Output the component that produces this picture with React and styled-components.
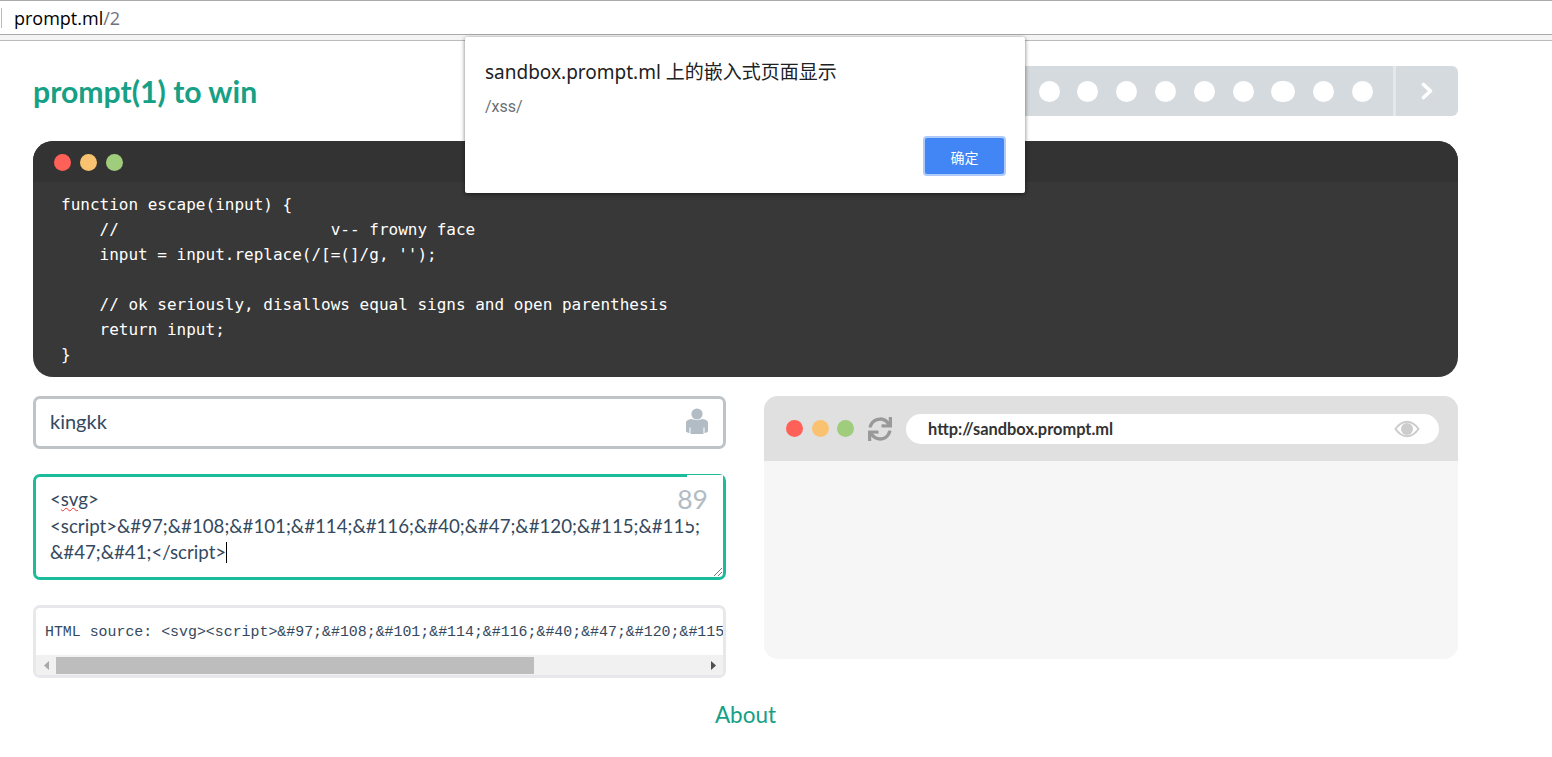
import styled, { createGlobalStyle } from "styled-components";
import { FaSync } from "react-icons/fa";

const GlobalStyle = createGlobalStyle`
  html, body {
    margin: 0;
    padding: 0;
    background: #fff;
    font-family: Lato, "Noto Sans CJK SC", sans-serif;
    color: #34495e;
    overflow: hidden;
  }
`;

const AddressBar = styled.div`
  height: 33px;
  border-top: 1px solid #aaa;
  border-bottom: 1px solid #aaa;
  display: flex;
  align-items: center;
  font-family: "Open Sans", sans-serif;
  font-size: 18px;
  color: #000;
  background: #fff;
  span { color: #6d7480; }
  &::before {
    content: "";
    width: 1px;
    height: 20px;
    background: #bbb;
    margin: 0 12px 0 1px;
  }
`;

const Strip = styled.div`
  height: 5px;
  background: #f4f4f4;
  border-bottom: 1px solid #bbb;
`;

const Page = styled.div`
  width: 1425px;
  margin-left: 33px;
`;

const Header = styled.header`
  margin-top: 25px;
  height: 50px;
  display: flex;
  justify-content: space-between;
  align-items: center;
`;

const Title = styled.h1`
  margin: 0 0 1px;
  font-size: 30.2px;
  font-weight: 700;
  color: #16a085;
`;

const Progress = styled.div`
  width: 500px;
  height: 50px;
  background: #d5dade;
  border-radius: 6px;
  display: flex;
  align-items: center;
  justify-content: flex-end;
`;

const Dots = styled.div`
  display: flex;
  align-items: center;
  gap: 17.8px;
  padding: 1px 20px 0 0;
  border-right: 3px solid #e4e8ea;
  height: 49px;
  margin-right: 1px;
`;

const Dot = styled.i`
  display: block;
  height: 21px;
  width: ${(p) => (p.$wide ? "24px" : "21px")};
  border-radius: 11px;
  background: #fff;
`;

const NextButton = styled.div`
  width: 61px;
  display: flex;
  justify-content: center;
  align-items: center;
`;

const CodePanel = styled.section`
  margin-top: 25px;
  height: 236px;
  background: #383838;
  border-radius: 20px;
  overflow: hidden;
`;

const CodeBar = styled.div`
  height: 41px;
  box-sizing: border-box;
  padding: 2px 0 0 21px;
  background: #333;
  display: flex;
  align-items: center;
  gap: 9px;
`;

const SandboxLights = styled.div`
  display: flex;
  gap: 8.5px;
`;

const Light = styled.i`
  display: block;
  width: 17px;
  height: 17px;
  border-radius: 50%;
  background: ${(p) => p.$color};
`;

const Code = styled.pre`
  margin: 10px 0 0 28px;
  font-family: "DejaVu Sans Mono", monospace;
  font-size: 16px;
  line-height: 25px;
  color: #fff;
`;

const Columns = styled.div`
  margin-top: 19px;
  display: grid;
  grid-template-columns: 693px 694px;
  gap: 38px;
  align-items: start;
`;

const LeftColumn = styled.div`
  display: flex;
  flex-direction: column;
  gap: 25px;
`;

const NameField = styled.div`
  height: 53px;
  box-sizing: border-box;
  border: 3px solid #bdc3c7;
  border-radius: 7px;
  padding: 0 14px 3px;
  display: flex;
  align-items: center;
  justify-content: space-between;
  font-size: 20px;
`;

const EditorField = styled.div`
  position: relative;
  height: 106px;
  box-sizing: border-box;
  border: 3px solid #1abc9c;
  border-radius: 7px;
  padding: 9px 14px;
  font-size: 18.7px;
  line-height: 26.7px;
  white-space: pre;
`;

const Squiggle = styled.span`
  text-decoration: underline wavy #e33;
  text-decoration-thickness: 1px;
`;

const Caret = styled.span`
  display: inline-block;
  width: 1px;
  height: 21px;
  background: #000;
  vertical-align: -4px;
`;

const Counter = styled.div`
  position: absolute;
  top: -2px;
  right: 0;
  width: 36px;
  height: 47px;
  box-sizing: border-box;
  padding: 9px 15px 0 0;
  display: flex;
  justify-content: flex-end;
  background: #fff;
  color: #b2bcc5;
  font-size: 26.5px;
  line-height: 30px;
`;

const Grip = styled.svg`
  position: absolute;
  right: 0;
  bottom: 0;
`;

const SourceBox = styled.div`
  height: 73px;
  box-sizing: border-box;
  border: 3px solid #e8e8ec;
  border-radius: 7px;
  overflow: hidden;
  display: flex;
  flex-direction: column;
`;

const SourceText = styled.div`
  flex: 1;
  padding-left: 9px;
  display: flex;
  align-items: center;
  padding-top: 1px;
  font-family: "Liberation Mono", monospace;
  font-size: 14.9px;
  white-space: nowrap;
  overflow: hidden;
`;

const ScrollTrack = styled.div`
  height: 20px;
  background: #f1f1f1;
  display: flex;
  align-items: center;
`;

const ScrollArrow = styled.div`
  width: 20px;
  display: flex;
  justify-content: center;
  svg { display: block; }
`;

const ScrollThumb = styled.div`
  width: 478px;
  height: 17px;
  background: #bdbdbd;
`;

const ScrollSpace = styled.div`
  flex: 1;
`;

const SandboxPanel = styled.section`
  height: 263px;
  background: #f6f6f6;
  border-radius: 14px;
  overflow: hidden;
`;

const SandboxBar = styled.div`
  height: 65px;
  background: #e0e0e0;
  display: flex;
  align-items: center;
  padding: 0 19px 0 22px;
`;

const UrlPill = styled.div`
  flex: 1;
  height: 30px;
  background: #fff;
  border-radius: 15px;
  display: flex;
  align-items: center;
  justify-content: space-between;
  padding: 0 19px 0 22px;
  font-size: 16.4px;
  font-weight: 700;
  color: #333;
`;

const Refresh = styled(FaSync)`
  width: 24px;
  height: 24px;
  margin: 0 14px 0 14px;
  color: #999;
`;

const About = styled.a`
  display: block;
  margin-top: 22px;
  text-align: center;
  font-size: 22.5px;
  line-height: 30px;
  color: #16a085;
`;

const Alert = styled.div`
  position: absolute;
  left: 465px;
  top: 37px;
  width: 560px;
  height: 156px;
  box-sizing: border-box;
  padding: 23px 20px 0;
  background: #fff;
  border-radius: 2px;
  box-shadow: 0 1px 4px rgba(0, 0, 0, 0.55);
`;

const AlertTitle = styled.div`
  font-family: "Noto Sans", "Noto Sans CJK SC", sans-serif;
  font-size: 19px;
  line-height: 24px;
  color: #202124;
`;

const AlertMessage = styled.div`
  margin-top: 13px;
  font-family: Roboto, sans-serif;
  font-size: 16px;
  line-height: 20px;
  color: #6b6f76;
`;

const AlertButton = styled.button`
  position: absolute;
  right: 19px;
  bottom: 17px;
  width: 83px;
  height: 40px;
  box-sizing: border-box;
  border: 2px solid #aecbfa;
  border-radius: 4px;
  background: #4285f4;
  color: #fff;
  font-family: "Noto Sans CJK SC", sans-serif;
  font-size: 14px;
  padding: 2px 0 0;
`;

const dotWidths = [0, 0, 0, 0, 0, 0, 1, 0, 0];

const UserIcon = () => (
  <svg width="24" height="27" viewBox="0 0 24 27">
    <circle cx="12" cy="6" r="5.6" fill="#b2bcc5" />
    <path d="M1 15c0-2.6 2.5-3.4 5.5-3.9 3.2 1.4 7.8 1.4 11 0 3 .5 5.500 1.300 5.500 3.900v8.500c-1 1-2.500 1.400-3.500 1.600v-5.600h-1v6.500H5.500v-6.500h-1v5.600C3.500 24.900 2 24.500 1 23.500z" fill="#b2bcc5" />
  </svg>
);

const ChevronIcon = () => (
  <svg width="13" height="18" viewBox="0 0 13 18">
    <path d="M2.500 2.500 9.500 9l-7 6.500" fill="none" stroke="#fff" strokeWidth="3.600" strokeLinecap="round" strokeLinejoin="round" />
  </svg>
);

const EyeIcon = () => (
  <svg width="26" height="18" viewBox="0 0 26 18">
    <path d="M1.500 9C5 4 9 1.800 13 1.800S21 4 24.500 9C21 14 17 16.200 13 16.200S5 14 1.500 9z" fill="none" stroke="#ccc" strokeWidth="2" />
    <circle cx="13" cy="9" r="6" fill="#ccc" />
  </svg>
);

const App = () => {
  return (
    <>
      <GlobalStyle />
      <AddressBar>
        prompt.ml<span>/2</span>
      </AddressBar>
      <Strip />
      <Page>
        <Header>
          <Title>prompt(1) to win</Title>
          <Progress>
            <Dots>
              {dotWidths.map((wide, i) => (
                <Dot key={i} $wide={wide === 1} />
              ))}
            </Dots>
            <NextButton>
              <ChevronIcon />
            </NextButton>
          </Progress>
        </Header>
        <CodePanel>
          <CodeBar>
            <Light $color="#ff6159" />
            <Light $color="#f9c270" />
            <Light $color="#9fcd7c" />
          </CodeBar>
          <Code>{`function escape(input) {
    //                      v-- frowny face
    input = input.replace(/[=(]/g, '');

    // ok seriously, disallows equal signs and open parenthesis
    return input;
}`}</Code>
        </CodePanel>
        <Columns>
          <LeftColumn>
            <NameField>
              kingkk
              <UserIcon />
            </NameField>
            <EditorField>
              {"<"}
              <Squiggle>svg</Squiggle>
              {">\n<script>&#97;&#108;&#101;&#114;&#116;&#40;&#47;&#120;&#115;&#115;\n&#47;&#41;</script>"}
              <Caret />
              <Counter>89</Counter>
              <Grip width="12" height="12" viewBox="0 0 12 12">
                <path d="M11 3 3 11M11 7l-4 4" stroke="#777" strokeWidth="1" />
              </Grip>
            </EditorField>
            <SourceBox>
              <SourceText>
                {"HTML source: <svg><script>&#97;&#108;&#101;&#114;&#116;&#40;&#47;&#120;&#115;&#115;&#47;&#41;</script>"}
              </SourceText>
              <ScrollTrack>
                <ScrollArrow>
                  <svg width="5" height="9" viewBox="0 0 5 9">
                    <path d="M5 0v9L0 4.500z" fill="#a8a8a8" />
                  </svg>
                </ScrollArrow>
                <ScrollThumb />
                <ScrollSpace />
                <ScrollArrow>
                  <svg width="5" height="9" viewBox="0 0 5 9">
                    <path d="M0 0v9l5-4.500z" fill="#505050" />
                  </svg>
                </ScrollArrow>
              </ScrollTrack>
            </SourceBox>
          </LeftColumn>
          <SandboxPanel>
            <SandboxBar>
              <SandboxLights>
                <Light $color="#ff6159" />
                <Light $color="#f9c270" />
                <Light $color="#9fcd7c" />
              </SandboxLights>
              <Refresh />
              <UrlPill>
                http://sandbox.prompt.ml
                <EyeIcon />
              </UrlPill>
            </SandboxBar>
          </SandboxPanel>
        </Columns>
        <About>About</About>
      </Page>
      <Alert>
        <AlertTitle>sandbox.prompt.ml 上的嵌入式页面显示</AlertTitle>
        <AlertMessage>/xss/</AlertMessage>
        <AlertButton>确定</AlertButton>
      </Alert>
    </>
  );
};

export default App;
